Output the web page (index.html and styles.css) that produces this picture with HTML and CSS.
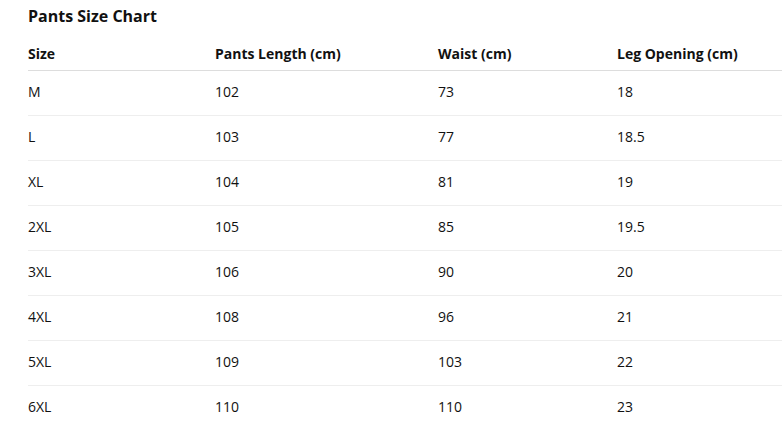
FILE: index.html
```html
<!DOCTYPE html>
<html lang="en">
<head>
<meta charset="utf-8">
<title>Pants Size Chart</title>
<link rel="stylesheet" href="styles.css">
</head>
<body>
<div class="chart">
  <h2 class="chart-title">Pants Size Chart</h2>
  <table class="size-table">
    <colgroup>
      <col class="c1"><col class="c2"><col class="c3"><col class="c4">
    </colgroup>
    <thead>
      <tr><th>Size</th><th>Pants Length (cm)</th><th>Waist (cm)</th><th>Leg Opening (cm)</th></tr>
    </thead>
    <tbody>
      <tr><td>M</td><td>102</td><td>73</td><td>18</td></tr>
      <tr><td>L</td><td>103</td><td>77</td><td>18.5</td></tr>
      <tr><td>XL</td><td>104</td><td>81</td><td>19</td></tr>
      <tr><td>2XL</td><td>105</td><td>85</td><td>19.5</td></tr>
      <tr><td>3XL</td><td>106</td><td>90</td><td>20</td></tr>
      <tr><td>4XL</td><td>108</td><td>96</td><td>21</td></tr>
      <tr><td>5XL</td><td>109</td><td>103</td><td>22</td></tr>
      <tr><td>6XL</td><td>110</td><td>110</td><td>23</td></tr>
    </tbody>
  </table>
</div>
</body>
</html>
```
FILE: styles.css
```css
html, body {
  margin: 0;
  padding: 0;
  background: #ffffff;
}
body {
  font-family: "Open Sans", "Noto Sans", "Liberation Sans", sans-serif;
  color: #111111;
}
.chart {
  padding: 5px 0 0 28px;
}
.chart-title {
  margin: 0;
  font-size: 16px;
  font-weight: 700;
  line-height: 22px;
  color: #111111;
}
.size-table {
  width: 754px;
  table-layout: fixed;
  border-collapse: collapse;
  margin-top: 11px;
  font-size: 14px;
}
.c1 { width: 187px; }
.c2 { width: 223px; }
.c3 { width: 179px; }
.c4 { width: 165px; }
.size-table th {
  text-align: left;
  font-weight: 700;
  padding: 6px 0;
  line-height: 20px;
  border-bottom: 1px solid #dddddd;
}
.size-table td {
  padding: 11px 0 13px;
  line-height: 20px;
  border-bottom: 1px solid #eeeeee;
}
.size-table tbody tr:last-child td {
  border-bottom: none;
}
```
